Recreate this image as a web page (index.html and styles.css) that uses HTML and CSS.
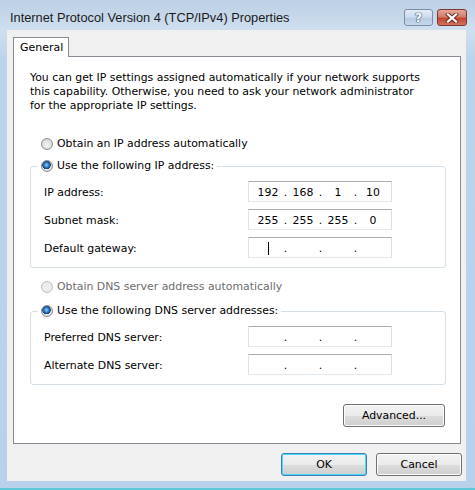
FILE: index.html
```html
<!DOCTYPE html>
<html lang="en">
<head>
  <meta charset="UTF-8" />
  <title>Internet Protocol Version 4 (TCP/IPv4) Properties</title>
  <link rel="stylesheet" href="styles.css">
</head>
<body>
  <div class="window">
    <div class="titlebar">
      <span class="title">Internet Protocol Version 4 (TCP/IPv4) Properties</span>
      <div class="caption-btns">
        <button class="cap-btn help">?</button>
        <button class="cap-btn close">
          <svg width="14" height="10" viewBox="0 0 14 10">
            <path d="M3 1.5 L11 8.5 M11 1.5 L3 8.5" stroke="#6b2a24" stroke-width="4" stroke-linecap="square" />
            <path d="M3 1.5 L11 8.5 M11 1.5 L3 8.5" stroke="#fff" stroke-width="2.2" stroke-linecap="square" />
          </svg>
        </button>
      </div>
    </div>

    <div class="client">
      <div class="tabs">
        <div class="tab">General</div>
      </div>

      <div class="panel">
        <p class="intro">You can get IP settings assigned automatically if your network supports<br>
          this capability. Otherwise, you need to ask your network administrator<br>
          for the appropriate IP settings.</p>

        <label class="radio first">
          <input type="radio" name="ip"> Obtain an IP address automatically
        </label>

        <fieldset class="group">
          <legend>
            <label class="radio"><input type="radio" name="ip" checked> Use the following IP address:</label>
          </legend>
          <div class="row">
            <span class="label">IP address:</span>
            <div class="ip-field">
              <span class="octet">192</span><span class="dot">.</span><span class="octet">168</span><span class="dot">.</span><span class="octet">1</span><span class="dot">.</span><span class="octet">10</span>
            </div>
          </div>
          <div class="row">
            <span class="label">Subnet mask:</span>
            <div class="ip-field">
              <span class="octet">255</span><span class="dot">.</span><span class="octet">255</span><span class="dot">.</span><span class="octet">255</span><span class="dot">.</span><span class="octet">0</span>
            </div>
          </div>
          <div class="row">
            <span class="label">Default gateway:</span>
            <div class="ip-field">
              <span class="octet"><span class="caret"></span></span><span class="dot">.</span><span class="octet"></span><span class="dot">.</span><span class="octet"></span><span class="dot">.</span><span class="octet"></span>
            </div>
          </div>
        </fieldset>

        <label class="radio dns-auto disabled">
          <input type="radio" name="dns" disabled> Obtain DNS server address automatically
        </label>

        <fieldset class="group dns">
          <legend>
            <label class="radio"><input type="radio" name="dns" checked> Use the following DNS server addresses:</label>
          </legend>
          <div class="row">
            <span class="label">Preferred DNS server:</span>
            <div class="ip-field">
              <span class="octet"></span><span class="dot">.</span><span class="octet"></span><span class="dot">.</span><span class="octet"></span><span class="dot">.</span><span class="octet"></span>
            </div>
          </div>
          <div class="row">
            <span class="label">Alternate DNS server:</span>
            <div class="ip-field">
              <span class="octet"></span><span class="dot">.</span><span class="octet"></span><span class="dot">.</span><span class="octet"></span><span class="dot">.</span><span class="octet"></span>
            </div>
          </div>
        </fieldset>

        <div class="advanced-row">
          <button class="btn advanced">Advanced...</button>
        </div>
      </div>

      <div class="footer">
        <button class="btn default">OK</button>
        <button class="btn">Cancel</button>
      </div>
    </div>
  </div>
</body>
</html>
```

FILE: styles.css
```css
body {
  margin: 0;
  font-family: 'DejaVu Sans', sans-serif;
  font-size: 10.9px;
  color: #000;
  overflow: hidden;
}

.window {
  width: 475px;
  height: 490px;
  box-sizing: border-box;
  display: flex;
  flex-direction: column;
  padding: 0 9px 7px 7px;
  background: linear-gradient(to bottom, #bccfe4 0, #cfdfef 30px, #bcd3ec 60px, #b9d1ea 100%);
  border-bottom: 2px solid #5ec8d8;
}

/* title bar */
.titlebar {
  height: 30px;
  display: flex;
  justify-content: space-between;
  align-items: flex-start;
}

.title {
  margin: 10px 0 0 3px;
  font-family: 'Liberation Sans', Arial, sans-serif;
  font-size: 12.8px;
  line-height: 16px;
  color: #1b1b1b;
}

.caption-btns {
  display: flex;
  gap: 4px;
  margin: 9px -1px 0 0;
}

.cap-btn {
  height: 17px;
  border-radius: 3px;
  padding: 0;
  display: flex;
  align-items: center;
  justify-content: center;
  cursor: pointer;
}

.help {
  width: 29px;
  border: 1px solid #7b8ea8;
  background: linear-gradient(to bottom, #e4edf7 0, #c9d9ec 50%, #b5c9e1 51%, #c6d8ec 100%);
  color: #fff;
  font: bold 13px 'DejaVu Sans', sans-serif;
  text-shadow: 0 0 1px #2c4870, 0 0 1px #2c4870, 0 0 1px #2c4870;
}

.close {
  width: 30px;
  border: 1px solid #7a3a33;
  background: linear-gradient(to bottom, #e3a699 0, #d47f6e 45%, #c2442f 55%, #d2735e 100%);
}

/* client area */
.client {
  flex: 1;
  background: #f0f0f0;
  padding: 7px 4px 0 6px;
  display: flex;
  flex-direction: column;
}

.tabs {
  display: flex;
  position: relative;
  z-index: 1;
  margin-bottom: -1px;
}

.tab {
  width: 56px;
  height: 20px;
  box-sizing: border-box;
  border: 1px solid #898c95;
  border-bottom: none;
  background: #fff;
  padding: 3px 0 0 6px;
  font-size: 11px;
}

.panel {
  height: 388px;
  width: 448px;
  box-sizing: border-box;
  border: 1px solid #898c95;
  background: #fff;
  padding: 14px 14px 0 16px;
}

.intro {
  margin: 0;
  line-height: 14px;
}

.radio {
  display: flex;
  align-items: center;
  height: 14px;
  line-height: 14px;
  white-space: nowrap;
}

.radio input {
  appearance: none;
  -webkit-appearance: none;
  width: 12px;
  height: 12px;
  margin: 0 4px 0 0;
  border-radius: 50%;
  border: 1px solid #8a8c8f;
  background: radial-gradient(circle at 50% 60%, #f5f5f5 0, #d8d8d8 70%, #cfcfcf 100%);
  box-sizing: border-box;
}

.radio input:checked {
  background:
    radial-gradient(circle at 45% 40%, #8fd0f0 0, #2f79c0 2.5px, #163f73 4px, transparent 4.5px),
    radial-gradient(circle, #f5f5f5 0, #d8d8d8 100%);
}

.radio.first {
  margin: 24px 0 0 11px;
}

.radio.disabled {
  color: #6d6d6d;
}

.radio.disabled input {
  border-color: #c0c0c0;
  background: #ececec;
}

.group {
  margin: 8px 0 0 0;
  padding: 0 0 9px 13px;
  border: 1px solid #d5dfe5;
  border-radius: 3px;
  min-width: 0;
}

.group legend {
  padding: 0 3px;
  margin-left: -6px;
}

.group .row:first-of-type {
  margin-top: 8px;
}

.row {
  display: flex;
  align-items: center;
  height: 21px;
  margin-top: 7px;
}

.label {
  width: 204px;
  padding-top: 2px;
}

.ip-field {
  width: 144px;
  height: 21px;
  box-sizing: border-box;
  border: 1px solid;
  border-color: #abadb3 #dbdfe6 #e3e9ef #e2e3ea;
  background: #fff;
  display: flex;
  align-items: center;
  padding: 1px 0 0 4px;
}

.octet {
  width: 30px;
  text-align: center;
  display: flex;
  justify-content: center;
  align-items: center;
  height: 14px;
}

.dot {
  width: 5px;
  text-align: center;
}

.caret {
  width: 1px;
  height: 13px;
  background: #000;
}

.dns-auto {
  margin: 12px 0 0 11px;
}

.group.dns {
  margin-top: 10px;
}

.advanced-row {
  display: flex;
  justify-content: flex-end;
  margin: 19px 1px 0 0;
}

.btn {
  width: 86px;
  height: 23px;
  font-family: 'DejaVu Sans', sans-serif;
  font-size: 10.9px;
  color: #000;
  border: 1px solid #707070;
  border-radius: 3px;
  background: linear-gradient(to bottom, #f2f2f2 0, #ebebeb 50%, #dddddd 51%, #cfcfcf 100%);
  box-shadow: inset 0 0 0 1px #fcfcfc;
  padding: 0;
  cursor: pointer;
}

.btn.advanced {
  width: 102px;
}

.btn.default {
  border-color: #3c7fb1;
  box-shadow: inset 0 0 0 1px #48d8fb;
}

.footer {
  display: flex;
  justify-content: flex-end;
  gap: 9px;
  margin-top: 9px;
}
```
